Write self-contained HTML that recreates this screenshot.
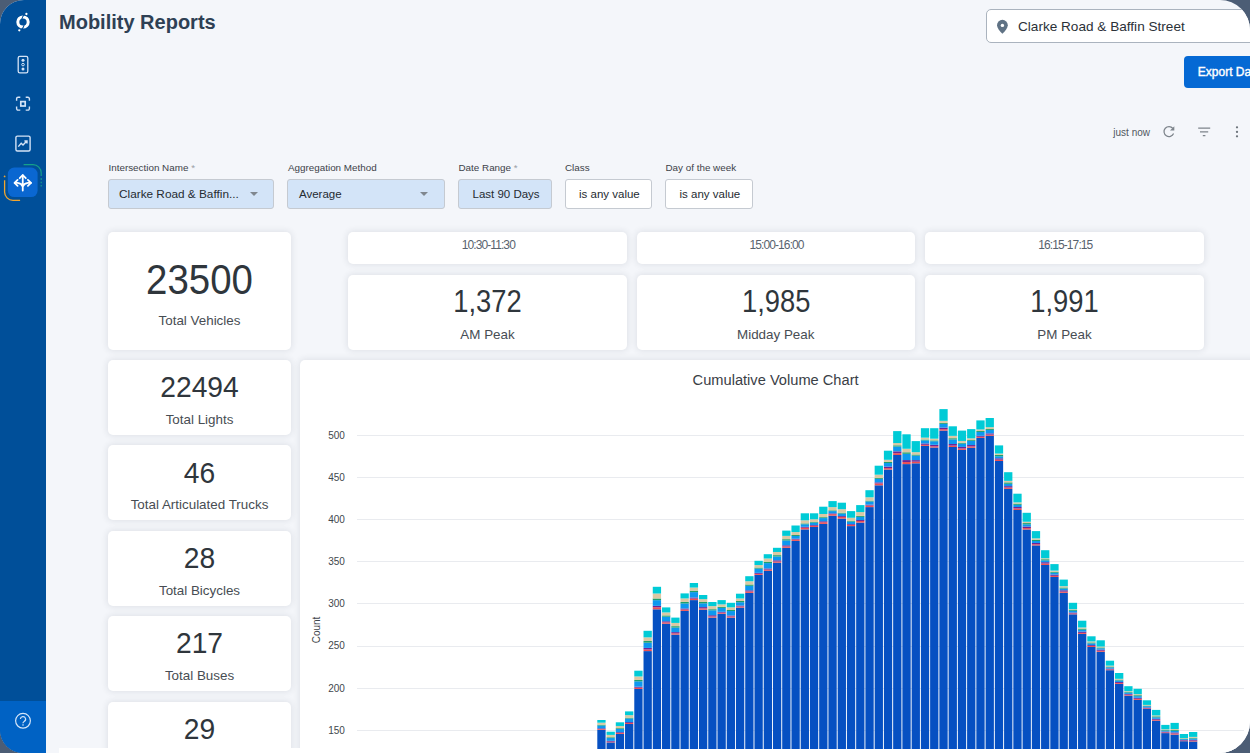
<!DOCTYPE html>
<html><head><meta charset="utf-8">
<style>
*{box-sizing:border-box;margin:0;padding:0}
html,body{width:1250px;height:753px;overflow:hidden;background:#4c5d75;font-family:"Liberation Sans",sans-serif}
#win{position:absolute;left:0;top:0;width:1250px;height:753px;border-radius:24px 30px 31px 23px;overflow:hidden;background:#f4f6fa}
.t{position:absolute;line-height:1;white-space:nowrap}
#side{position:absolute;left:0;top:0;width:46px;height:753px;background:#004f99}
#sideb{position:absolute;left:0;top:701px;width:46px;height:52px;background:#0062c4}
.search{position:absolute;left:986px;top:8.5px;width:300px;height:34.3px;background:#fff;border:1px solid #aab3be;border-radius:5px}
.export{position:absolute;left:1183.6px;top:56px;width:100px;height:32px;background:#0569d4;border-radius:4px}
.lbl{position:absolute;top:163.2px;font-size:9.85px;line-height:1;color:#3c4249;white-space:nowrap}
.lbl i{font-style:normal;color:#9aa0a6}
.sel{position:absolute;top:179px;height:30px;border:1px solid #c5cad1;border-radius:3px;background:#d3e4f8;color:#252b31}
.sel .t{top:8.5px;font-size:11.5px}
.sel.w{background:#fff}
.caret{position:absolute;top:12.3px;width:0;height:0;border-left:4px solid transparent;border-right:4px solid transparent;border-top:4px solid #80878f}
.card{position:absolute;background:#fff;border-radius:5px;box-shadow:0 0 6px 1px rgba(40,50,70,.10)}
.num{color:#2f363c;text-align:center}
.cap{color:#474d53;text-align:center;font-size:13.4px}
.ph{color:#58626e;text-align:center;font-size:12px;letter-spacing:-0.9px}
.yl{position:absolute;left:314.4px;width:30.5px;text-align:right;font-size:10px;line-height:1;color:#41474d}
.gl{position:absolute;left:357px;width:887px;height:1px;background:#e9ebef}
</style></head><body>
<div id="win">
  <div id="side">
    <svg class="t" style="left:0;top:0" width="46" height="210" viewBox="0 0 46 210">
      <!-- logo -->
      <ellipse cx="23" cy="22" rx="5.2" ry="5.1" fill="none" stroke="#fff" stroke-width="3"/>
      <path d="M24.6 14.2 Q22.4 16.5 21.6 19.6 M21.4 29.8 Q23.6 27.5 24.4 24.4" fill="none" stroke="#004f99" stroke-width="1.1"/>
      <circle cx="26.4" cy="14" r="1.15" fill="#fff"/>
      <circle cx="19.3" cy="30.3" r="1.15" fill="#fff"/>
      <!-- traffic light -->
      <rect x="18.2" y="56.3" width="9.6" height="16.6" rx="1.6" fill="none" stroke="#d4e3f6" stroke-width="1.3"/>
      <circle cx="23" cy="60.2" r="1.5" fill="#d4e3f6"/>
      <circle cx="23" cy="64.6" r="1.3" fill="none" stroke="#d4e3f6" stroke-width="1"/>
      <circle cx="23" cy="69" r="1.5" fill="#d4e3f6"/>
      <!-- focus -->
      <path d="M16.6 100.8 V98.8 A1.5 1.5 0 0 1 18.1 97.3 H20.3 M25.7 97.3 H27.9 A1.5 1.5 0 0 1 29.4 98.8 V100.8 M29.4 106.6 V108.6 A1.5 1.5 0 0 1 27.9 110.1 H25.7 M20.3 110.1 H18.1 A1.5 1.5 0 0 1 16.6 108.6 V106.6" fill="none" stroke="#d4e3f6" stroke-width="1.4"/>
      <rect x="20.8" y="101.6" width="4.4" height="4.4" fill="none" stroke="#d4e3f6" stroke-width="1.7"/>
      <!-- chart -->
      <rect x="15.9" y="136.1" width="14.2" height="14.9" rx="1.5" fill="none" stroke="#d4e3f6" stroke-width="1.4"/>
      <path d="M18.3 146.6 L21.2 143.3 L23 145 L26.6 141.2 M24.4 141 H27 V143.6" fill="none" stroke="#d4e3f6" stroke-width="1.4"/>
      <!-- active -->
      <path d="M23.6 164.7 H33 A8.2 8.2 0 0 1 41.2 172.9 V176" fill="none" stroke="#15a08a" stroke-width="1.2"/>
      <path d="M41.2 178 V180 M41.2 181.8 V183.2 M41.2 185 V186.6" fill="none" stroke="#15a08a" stroke-width="1.1"/>
      <path d="M4.6 180.2 V192 A8.3 8.3 0 0 0 12.9 200.3 H20.1" fill="none" stroke="#f2a52e" stroke-width="1.3"/>
      <circle cx="4.6" cy="176.4" r="0.9" fill="#f2a52e"/>
      <rect x="7.8" y="167.6" width="29.8" height="29.5" rx="6.5" fill="#0a67d1"/>
      <path d="M22.75 175.5 V190.6 M14.8 182.9 H17.5 C20 183.2 22 184.5 22.75 186.6 C23.5 184.5 25.5 183.2 28 182.9 H30.9" fill="none" stroke="#fff" stroke-width="1.8" stroke-linecap="round" stroke-linejoin="round"/>
      <path d="M19.7 178.2 L22.75 175 L25.8 178.2 M17.6 179.9 L14.5 182.9 L17.6 185.8 M27.9 179.9 L31 182.9 L27.9 185.8" fill="none" stroke="#fff" stroke-width="1.8" stroke-linecap="round" stroke-linejoin="round"/>
    </svg>
  </div>
  <div id="sideb">
    <svg class="t" style="left:0;top:0" width="46" height="52" viewBox="0 701 46 52">
      <circle cx="23" cy="720.8" r="7.4" fill="none" stroke="#d2e4f8" stroke-width="1.2"/>
      <path d="M20.4 719.1 A2.6 2.5 0 1 1 24.2 721.4 C23.3 721.9 23 722.5 23 723.3" fill="none" stroke="#d2e4f8" stroke-width="1.2"/>
      <rect x="22.3" y="724.3" width="1.4" height="1.3" fill="#d2e4f8"/>
    </svg>
  </div>

  <div class="t" style="left:59px;top:11.6px;font-size:20px;font-weight:bold;color:#2e4054">Mobility Reports</div>

  <div class="search">
    <svg class="t" style="left:9px;top:9px" width="14" height="16" viewBox="0 0 14 16">
      <path d="M6.4 14.8 C3.6 11.8 1 9 1 6.2 A5.4 5.4 0 0 1 11.8 6.2 C11.8 9 9.2 11.8 6.4 14.8 Z" fill="#5f7284"/>
      <circle cx="6.4" cy="6.4" r="1.7" fill="#fff"/>
    </svg>
    <div class="t" style="left:31px;top:10.2px;font-size:13.6px;color:#2b3138">Clarke Road &amp; Baffin Street</div>
  </div>
  <div class="export"><div class="t" style="left:14.2px;top:10px;font-size:12px;color:#fff;-webkit-text-stroke:0.4px #fff">Export Data</div></div>

  <div class="t" style="left:1113.3px;top:127.6px;font-size:10px;color:#50575e">just now</div>
  <svg class="t" style="left:0;top:0" width="1250" height="160" viewBox="0 0 1250 160">
    <path d="M1172.9 128.4 A5 5 0 1 0 1173.6 133.6" fill="none" stroke="#7d848b" stroke-width="1.25"/>
    <path d="M1174.3 126.3 L1174.3 130.6 L1170 130.6 Z" fill="#7d848b"/>
    <path d="M1198.2 128.1 H1210.2 M1200 131.8 H1208.2 M1202.8 135.6 H1205.4" stroke="#7d848b" stroke-width="1.2"/>
    <circle cx="1237" cy="127.3" r="1.15" fill="#6f767d"/><circle cx="1237" cy="131.9" r="1.15" fill="#6f767d"/><circle cx="1237" cy="136.3" r="1.15" fill="#6f767d"/>
  </svg>

  <div class="lbl" style="left:108.5px">Intersection Name <i>*</i></div>
  <div class="sel" style="left:108px;width:166px"><span class="t" style="left:10px;font-size:11.8px">Clarke Road &amp; Baffin...</span><span class="caret" style="left:141px"></span></div>
  <div class="lbl" style="left:288px">Aggregation Method</div>
  <div class="sel" style="left:287px;width:158px"><span class="t" style="left:11px">Average</span><span class="caret" style="left:132px"></span></div>
  <div class="lbl" style="left:458.5px">Date Range <i>*</i></div>
  <div class="sel" style="left:458px;width:94px"><span class="t" style="left:13.5px">Last 90 Days</span></div>
  <div class="lbl" style="left:565px">Class</div>
  <div class="sel w" style="left:565px;width:87px"><span class="t" style="left:13px">is any value</span></div>
  <div class="lbl" style="left:665.5px">Day of the week</div>
  <div class="sel w" style="left:665px;width:88px"><span class="t" style="left:13.5px">is any value</span></div>

  <!-- peak cards -->
  <div class="card" style="left:348px;top:232px;width:279px;height:32px"><div class="t ph" style="left:1.6px;right:0;top:6.8px">10:30-11:30</div></div>
  <div class="card" style="left:636.5px;top:232px;width:278.5px;height:32px"><div class="t ph" style="left:1.6px;right:0;top:6.8px">15:00-16:00</div></div>
  <div class="card" style="left:925px;top:232px;width:279px;height:32px"><div class="t ph" style="left:1.6px;right:0;top:6.8px">16:15-17:15</div></div>

  <div class="card" style="left:348px;top:275px;width:279px;height:75px">
    <div class="t num" style="left:0;right:0;top:11.1px;font-size:31.8px;transform:scaleX(0.86)">1,372</div>
    <div class="t cap" style="left:0;right:0;top:52.6px">AM Peak</div></div>
  <div class="card" style="left:636.5px;top:275px;width:278.5px;height:75px">
    <div class="t num" style="left:0;right:0;top:11.1px;font-size:31.8px;transform:scaleX(0.86)">1,985</div>
    <div class="t cap" style="left:0;right:0;top:52.6px">Midday Peak</div></div>
  <div class="card" style="left:925px;top:275px;width:279px;height:75px">
    <div class="t num" style="left:0;right:0;top:11.1px;font-size:31.8px;transform:scaleX(0.86)">1,991</div>
    <div class="t cap" style="left:0;right:0;top:52.6px">PM Peak</div></div>

  <!-- left column -->
  <div class="card" style="left:108px;top:232px;width:183px;height:118px">
    <div class="t num" style="left:0;right:0;top:26.2px;font-size:43.2px;transform:scaleX(0.89)">23500</div>
    <div class="t cap" style="left:0;right:0;top:82px">Total Vehicles</div></div>
  <div class="card" style="left:108px;top:360px;width:183px;height:75px">
    <div class="t num" style="left:0;right:0;top:12.2px;font-size:30px;transform:scaleX(0.94)">22494</div>
    <div class="t cap" style="left:0;right:0;top:52.8px">Total Lights</div></div>
  <div class="card" style="left:108px;top:445.4px;width:183px;height:75px">
    <div class="t num" style="left:0;right:0;top:12.2px;font-size:30px;transform:scaleX(0.94)">46</div>
    <div class="t cap" style="left:0;right:0;top:52.8px">Total Articulated Trucks</div></div>
  <div class="card" style="left:108px;top:530.8px;width:183px;height:75px">
    <div class="t num" style="left:0;right:0;top:12.2px;font-size:30px;transform:scaleX(0.94)">28</div>
    <div class="t cap" style="left:0;right:0;top:52.8px">Total Bicycles</div></div>
  <div class="card" style="left:108px;top:616px;width:183px;height:75px">
    <div class="t num" style="left:0;right:0;top:12.2px;font-size:30px;transform:scaleX(0.94)">217</div>
    <div class="t cap" style="left:0;right:0;top:52.8px">Total Buses</div></div>
  <div class="card" style="left:108px;top:701.5px;width:183px;height:75px">
    <div class="t num" style="left:0;right:0;top:12.2px;font-size:30px;transform:scaleX(0.94)">29</div></div>

  <!-- chart -->
  <div class="card" style="left:300px;top:360px;width:1000px;height:500px"></div>
  <div class="t" style="left:692.6px;top:372.6px;font-size:14.65px;color:#3a4046">Cumulative Volume Chart</div>
  <div class="gl" style="top:730px"></div>
<div class="yl" style="top:725.70px">150</div>
<div class="gl" style="top:688px"></div>
<div class="yl" style="top:683.59px">200</div>
<div class="gl" style="top:646px"></div>
<div class="yl" style="top:641.47px">250</div>
<div class="gl" style="top:603px"></div>
<div class="yl" style="top:599.36px">300</div>
<div class="gl" style="top:561px"></div>
<div class="yl" style="top:557.24px">350</div>
<div class="gl" style="top:519px"></div>
<div class="yl" style="top:515.12px">400</div>
<div class="gl" style="top:477px"></div>
<div class="yl" style="top:473.01px">450</div>
<div class="gl" style="top:435px"></div>
<div class="yl" style="top:430.90px">500</div>
  <div class="t" style="left:296.6px;top:624.7px;width:40px;font-size:10px;color:#3f454b;transform:rotate(-90deg);text-align:center">Count</div>
  <div class="t" style="left:59px;top:748.4px;width:1250px;height:10px;background:#fff"></div>
  <svg class="t" style="left:0;top:0" width="1250" height="753" viewBox="0 0 1250 753">
<rect x="597.30" y="729.80" width="8.3" height="19.20" fill="#0650c2"/>
<rect x="597.30" y="729.04" width="8.3" height="0.76" fill="#ee4f52"/>
<rect x="597.30" y="728.31" width="8.3" height="0.73" fill="#6c2397"/>
<rect x="597.30" y="725.55" width="8.3" height="2.76" fill="#0c98f0"/>
<rect x="597.30" y="724.70" width="8.3" height="0.85" fill="#1da06c"/>
<rect x="597.30" y="722.68" width="8.3" height="2.02" fill="#dbc8a3"/>
<rect x="597.30" y="720.00" width="8.3" height="2.68" fill="#00cbd6"/>
<rect x="606.54" y="742.40" width="8.3" height="6.60" fill="#0650c2"/>
<rect x="606.54" y="741.66" width="8.3" height="0.74" fill="#ee4f52"/>
<rect x="606.54" y="740.84" width="8.3" height="0.83" fill="#6c2397"/>
<rect x="606.54" y="738.04" width="8.3" height="2.80" fill="#0c98f0"/>
<rect x="606.54" y="737.25" width="8.3" height="0.79" fill="#1da06c"/>
<rect x="606.54" y="734.90" width="8.3" height="2.35" fill="#dbc8a3"/>
<rect x="606.54" y="731.70" width="8.3" height="3.20" fill="#00cbd6"/>
<rect x="615.79" y="733.90" width="8.3" height="15.10" fill="#0650c2"/>
<rect x="615.79" y="732.93" width="8.3" height="0.97" fill="#ee4f52"/>
<rect x="615.79" y="732.16" width="8.3" height="0.77" fill="#6c2397"/>
<rect x="615.79" y="728.94" width="8.3" height="3.22" fill="#0c98f0"/>
<rect x="615.79" y="728.15" width="8.3" height="0.79" fill="#1da06c"/>
<rect x="615.79" y="725.97" width="8.3" height="2.18" fill="#dbc8a3"/>
<rect x="615.79" y="722.30" width="8.3" height="3.67" fill="#00cbd6"/>
<rect x="625.03" y="724.00" width="8.3" height="25.00" fill="#0650c2"/>
<rect x="625.03" y="723.02" width="8.3" height="0.98" fill="#ee4f52"/>
<rect x="625.03" y="722.10" width="8.3" height="0.92" fill="#6c2397"/>
<rect x="625.03" y="718.51" width="8.3" height="3.59" fill="#0c98f0"/>
<rect x="625.03" y="717.66" width="8.3" height="0.85" fill="#1da06c"/>
<rect x="625.03" y="715.16" width="8.3" height="2.50" fill="#dbc8a3"/>
<rect x="625.03" y="711.40" width="8.3" height="3.76" fill="#00cbd6"/>
<rect x="634.28" y="689.00" width="8.3" height="60.00" fill="#0650c2"/>
<rect x="634.28" y="687.70" width="8.3" height="1.30" fill="#ee4f52"/>
<rect x="634.28" y="686.67" width="8.3" height="1.04" fill="#6c2397"/>
<rect x="634.28" y="681.31" width="8.3" height="5.35" fill="#0c98f0"/>
<rect x="634.28" y="679.95" width="8.3" height="1.37" fill="#1da06c"/>
<rect x="634.28" y="676.46" width="8.3" height="3.49" fill="#dbc8a3"/>
<rect x="634.28" y="670.70" width="8.3" height="5.76" fill="#00cbd6"/>
<rect x="643.52" y="651.10" width="8.3" height="97.90" fill="#0650c2"/>
<rect x="643.52" y="649.45" width="8.3" height="1.65" fill="#ee4f52"/>
<rect x="643.52" y="647.92" width="8.3" height="1.53" fill="#6c2397"/>
<rect x="643.52" y="642.67" width="8.3" height="5.25" fill="#0c98f0"/>
<rect x="643.52" y="640.99" width="8.3" height="1.69" fill="#1da06c"/>
<rect x="643.52" y="637.37" width="8.3" height="3.62" fill="#dbc8a3"/>
<rect x="643.52" y="630.80" width="8.3" height="6.57" fill="#00cbd6"/>
<rect x="652.77" y="609.30" width="8.3" height="139.70" fill="#0650c2"/>
<rect x="652.77" y="607.26" width="8.3" height="2.04" fill="#ee4f52"/>
<rect x="652.77" y="605.86" width="8.3" height="1.41" fill="#6c2397"/>
<rect x="652.77" y="600.15" width="8.3" height="5.70" fill="#0c98f0"/>
<rect x="652.77" y="598.48" width="8.3" height="1.67" fill="#1da06c"/>
<rect x="652.77" y="593.53" width="8.3" height="4.95" fill="#dbc8a3"/>
<rect x="652.77" y="586.80" width="8.3" height="6.73" fill="#00cbd6"/>
<rect x="662.01" y="623.70" width="8.3" height="125.30" fill="#0650c2"/>
<rect x="662.01" y="622.34" width="8.3" height="1.36" fill="#ee4f52"/>
<rect x="662.01" y="621.26" width="8.3" height="1.08" fill="#6c2397"/>
<rect x="662.01" y="616.67" width="8.3" height="4.59" fill="#0c98f0"/>
<rect x="662.01" y="615.41" width="8.3" height="1.26" fill="#1da06c"/>
<rect x="662.01" y="612.44" width="8.3" height="2.97" fill="#dbc8a3"/>
<rect x="662.01" y="607.40" width="8.3" height="5.04" fill="#00cbd6"/>
<rect x="671.26" y="634.60" width="8.3" height="114.40" fill="#0650c2"/>
<rect x="671.26" y="633.33" width="8.3" height="1.27" fill="#ee4f52"/>
<rect x="671.26" y="632.12" width="8.3" height="1.21" fill="#6c2397"/>
<rect x="671.26" y="627.56" width="8.3" height="4.56" fill="#0c98f0"/>
<rect x="671.26" y="626.16" width="8.3" height="1.39" fill="#1da06c"/>
<rect x="671.26" y="622.92" width="8.3" height="3.25" fill="#dbc8a3"/>
<rect x="671.26" y="617.60" width="8.3" height="5.32" fill="#00cbd6"/>
<rect x="680.50" y="610.90" width="8.3" height="138.10" fill="#0650c2"/>
<rect x="680.50" y="609.52" width="8.3" height="1.38" fill="#ee4f52"/>
<rect x="680.50" y="608.49" width="8.3" height="1.03" fill="#6c2397"/>
<rect x="680.50" y="603.40" width="8.3" height="5.09" fill="#0c98f0"/>
<rect x="680.50" y="601.91" width="8.3" height="1.49" fill="#1da06c"/>
<rect x="680.50" y="598.42" width="8.3" height="3.49" fill="#dbc8a3"/>
<rect x="680.50" y="593.40" width="8.3" height="5.02" fill="#00cbd6"/>
<rect x="689.75" y="600.10" width="8.3" height="148.90" fill="#0650c2"/>
<rect x="689.75" y="598.61" width="8.3" height="1.49" fill="#ee4f52"/>
<rect x="689.75" y="597.49" width="8.3" height="1.12" fill="#6c2397"/>
<rect x="689.75" y="592.10" width="8.3" height="5.39" fill="#0c98f0"/>
<rect x="689.75" y="590.67" width="8.3" height="1.43" fill="#1da06c"/>
<rect x="689.75" y="587.56" width="8.3" height="3.11" fill="#dbc8a3"/>
<rect x="689.75" y="583.00" width="8.3" height="4.56" fill="#00cbd6"/>
<rect x="698.99" y="609.70" width="8.3" height="139.30" fill="#0650c2"/>
<rect x="698.99" y="608.34" width="8.3" height="1.36" fill="#ee4f52"/>
<rect x="698.99" y="607.10" width="8.3" height="1.24" fill="#6c2397"/>
<rect x="698.99" y="603.32" width="8.3" height="3.78" fill="#0c98f0"/>
<rect x="698.99" y="601.98" width="8.3" height="1.34" fill="#1da06c"/>
<rect x="698.99" y="599.13" width="8.3" height="2.85" fill="#dbc8a3"/>
<rect x="698.99" y="595.00" width="8.3" height="4.13" fill="#00cbd6"/>
<rect x="708.24" y="617.60" width="8.3" height="131.40" fill="#0650c2"/>
<rect x="708.24" y="616.41" width="8.3" height="1.19" fill="#ee4f52"/>
<rect x="708.24" y="615.22" width="8.3" height="1.20" fill="#6c2397"/>
<rect x="708.24" y="610.30" width="8.3" height="4.92" fill="#0c98f0"/>
<rect x="708.24" y="609.20" width="8.3" height="1.09" fill="#1da06c"/>
<rect x="708.24" y="606.10" width="8.3" height="3.11" fill="#dbc8a3"/>
<rect x="708.24" y="602.00" width="8.3" height="4.10" fill="#00cbd6"/>
<rect x="717.48" y="613.70" width="8.3" height="135.30" fill="#0650c2"/>
<rect x="717.48" y="612.64" width="8.3" height="1.06" fill="#ee4f52"/>
<rect x="717.48" y="611.81" width="8.3" height="0.83" fill="#6c2397"/>
<rect x="717.48" y="607.92" width="8.3" height="3.89" fill="#0c98f0"/>
<rect x="717.48" y="606.77" width="8.3" height="1.14" fill="#1da06c"/>
<rect x="717.48" y="604.40" width="8.3" height="2.37" fill="#dbc8a3"/>
<rect x="717.48" y="600.10" width="8.3" height="4.30" fill="#00cbd6"/>
<rect x="726.73" y="617.60" width="8.3" height="131.40" fill="#0650c2"/>
<rect x="726.73" y="616.43" width="8.3" height="1.17" fill="#ee4f52"/>
<rect x="726.73" y="615.49" width="8.3" height="0.94" fill="#6c2397"/>
<rect x="726.73" y="611.04" width="8.3" height="4.45" fill="#0c98f0"/>
<rect x="726.73" y="609.97" width="8.3" height="1.06" fill="#1da06c"/>
<rect x="726.73" y="607.31" width="8.3" height="2.67" fill="#dbc8a3"/>
<rect x="726.73" y="602.80" width="8.3" height="4.51" fill="#00cbd6"/>
<rect x="735.97" y="607.60" width="8.3" height="141.40" fill="#0650c2"/>
<rect x="735.97" y="606.45" width="8.3" height="1.15" fill="#ee4f52"/>
<rect x="735.97" y="605.57" width="8.3" height="0.88" fill="#6c2397"/>
<rect x="735.97" y="602.20" width="8.3" height="3.37" fill="#0c98f0"/>
<rect x="735.97" y="600.96" width="8.3" height="1.24" fill="#1da06c"/>
<rect x="735.97" y="598.46" width="8.3" height="2.50" fill="#dbc8a3"/>
<rect x="735.97" y="593.70" width="8.3" height="4.76" fill="#00cbd6"/>
<rect x="745.22" y="592.90" width="8.3" height="156.10" fill="#0650c2"/>
<rect x="745.22" y="591.44" width="8.3" height="1.46" fill="#ee4f52"/>
<rect x="745.22" y="590.33" width="8.3" height="1.10" fill="#6c2397"/>
<rect x="745.22" y="585.81" width="8.3" height="4.53" fill="#0c98f0"/>
<rect x="745.22" y="584.49" width="8.3" height="1.32" fill="#1da06c"/>
<rect x="745.22" y="581.25" width="8.3" height="3.24" fill="#dbc8a3"/>
<rect x="745.22" y="576.20" width="8.3" height="5.05" fill="#00cbd6"/>
<rect x="754.46" y="574.90" width="8.3" height="174.10" fill="#0650c2"/>
<rect x="754.46" y="573.81" width="8.3" height="1.09" fill="#ee4f52"/>
<rect x="754.46" y="572.85" width="8.3" height="0.97" fill="#6c2397"/>
<rect x="754.46" y="568.62" width="8.3" height="4.23" fill="#0c98f0"/>
<rect x="754.46" y="567.55" width="8.3" height="1.07" fill="#1da06c"/>
<rect x="754.46" y="565.07" width="8.3" height="2.48" fill="#dbc8a3"/>
<rect x="754.46" y="560.80" width="8.3" height="4.27" fill="#00cbd6"/>
<rect x="763.71" y="570.80" width="8.3" height="178.20" fill="#0650c2"/>
<rect x="763.71" y="569.56" width="8.3" height="1.24" fill="#ee4f52"/>
<rect x="763.71" y="568.46" width="8.3" height="1.10" fill="#6c2397"/>
<rect x="763.71" y="563.08" width="8.3" height="5.37" fill="#0c98f0"/>
<rect x="763.71" y="561.73" width="8.3" height="1.35" fill="#1da06c"/>
<rect x="763.71" y="558.50" width="8.3" height="3.24" fill="#dbc8a3"/>
<rect x="763.71" y="554.20" width="8.3" height="4.30" fill="#00cbd6"/>
<rect x="772.95" y="562.70" width="8.3" height="186.30" fill="#0650c2"/>
<rect x="772.95" y="561.45" width="8.3" height="1.25" fill="#ee4f52"/>
<rect x="772.95" y="560.30" width="8.3" height="1.15" fill="#6c2397"/>
<rect x="772.95" y="556.46" width="8.3" height="3.84" fill="#0c98f0"/>
<rect x="772.95" y="555.14" width="8.3" height="1.33" fill="#1da06c"/>
<rect x="772.95" y="551.97" width="8.3" height="3.16" fill="#dbc8a3"/>
<rect x="772.95" y="547.80" width="8.3" height="4.17" fill="#00cbd6"/>
<rect x="782.20" y="547.80" width="8.3" height="201.20" fill="#0650c2"/>
<rect x="782.20" y="546.44" width="8.3" height="1.36" fill="#ee4f52"/>
<rect x="782.20" y="545.30" width="8.3" height="1.14" fill="#6c2397"/>
<rect x="782.20" y="540.45" width="8.3" height="4.85" fill="#0c98f0"/>
<rect x="782.20" y="539.19" width="8.3" height="1.26" fill="#1da06c"/>
<rect x="782.20" y="535.88" width="8.3" height="3.31" fill="#dbc8a3"/>
<rect x="782.20" y="530.60" width="8.3" height="5.28" fill="#00cbd6"/>
<rect x="791.44" y="540.90" width="8.3" height="208.10" fill="#0650c2"/>
<rect x="791.44" y="539.55" width="8.3" height="1.35" fill="#ee4f52"/>
<rect x="791.44" y="538.72" width="8.3" height="0.82" fill="#6c2397"/>
<rect x="791.44" y="535.97" width="8.3" height="2.75" fill="#0c98f0"/>
<rect x="791.44" y="534.98" width="8.3" height="0.99" fill="#1da06c"/>
<rect x="791.44" y="532.06" width="8.3" height="2.93" fill="#dbc8a3"/>
<rect x="791.44" y="525.50" width="8.3" height="6.56" fill="#00cbd6"/>
<rect x="800.69" y="529.40" width="8.3" height="219.60" fill="#0650c2"/>
<rect x="800.69" y="527.74" width="8.3" height="1.66" fill="#ee4f52"/>
<rect x="800.69" y="526.82" width="8.3" height="0.92" fill="#6c2397"/>
<rect x="800.69" y="524.25" width="8.3" height="2.56" fill="#0c98f0"/>
<rect x="800.69" y="523.41" width="8.3" height="0.84" fill="#1da06c"/>
<rect x="800.69" y="520.30" width="8.3" height="3.11" fill="#dbc8a3"/>
<rect x="800.69" y="513.30" width="8.3" height="7.00" fill="#00cbd6"/>
<rect x="809.93" y="527.00" width="8.3" height="222.00" fill="#0650c2"/>
<rect x="809.93" y="525.75" width="8.3" height="1.25" fill="#ee4f52"/>
<rect x="809.93" y="524.98" width="8.3" height="0.77" fill="#6c2397"/>
<rect x="809.93" y="522.61" width="8.3" height="2.37" fill="#0c98f0"/>
<rect x="809.93" y="521.99" width="8.3" height="0.63" fill="#1da06c"/>
<rect x="809.93" y="519.27" width="8.3" height="2.71" fill="#dbc8a3"/>
<rect x="809.93" y="513.30" width="8.3" height="5.97" fill="#00cbd6"/>
<rect x="819.18" y="523.90" width="8.3" height="225.10" fill="#0650c2"/>
<rect x="819.18" y="522.23" width="8.3" height="1.67" fill="#ee4f52"/>
<rect x="819.18" y="521.26" width="8.3" height="0.97" fill="#6c2397"/>
<rect x="819.18" y="518.08" width="8.3" height="3.18" fill="#0c98f0"/>
<rect x="819.18" y="517.18" width="8.3" height="0.90" fill="#1da06c"/>
<rect x="819.18" y="513.98" width="8.3" height="3.20" fill="#dbc8a3"/>
<rect x="819.18" y="506.70" width="8.3" height="7.28" fill="#00cbd6"/>
<rect x="828.42" y="515.70" width="8.3" height="233.30" fill="#0650c2"/>
<rect x="828.42" y="514.15" width="8.3" height="1.55" fill="#ee4f52"/>
<rect x="828.42" y="513.38" width="8.3" height="0.77" fill="#6c2397"/>
<rect x="828.42" y="511.10" width="8.3" height="2.28" fill="#0c98f0"/>
<rect x="828.42" y="510.34" width="8.3" height="0.76" fill="#1da06c"/>
<rect x="828.42" y="507.12" width="8.3" height="3.21" fill="#dbc8a3"/>
<rect x="828.42" y="501.10" width="8.3" height="6.02" fill="#00cbd6"/>
<rect x="837.67" y="518.60" width="8.3" height="230.40" fill="#0650c2"/>
<rect x="837.67" y="516.87" width="8.3" height="1.73" fill="#ee4f52"/>
<rect x="837.67" y="516.02" width="8.3" height="0.85" fill="#6c2397"/>
<rect x="837.67" y="513.57" width="8.3" height="2.46" fill="#0c98f0"/>
<rect x="837.67" y="512.67" width="8.3" height="0.90" fill="#1da06c"/>
<rect x="837.67" y="509.18" width="8.3" height="3.49" fill="#dbc8a3"/>
<rect x="837.67" y="502.70" width="8.3" height="6.48" fill="#00cbd6"/>
<rect x="846.91" y="526.10" width="8.3" height="222.90" fill="#0650c2"/>
<rect x="846.91" y="524.78" width="8.3" height="1.32" fill="#ee4f52"/>
<rect x="846.91" y="524.01" width="8.3" height="0.77" fill="#6c2397"/>
<rect x="846.91" y="521.62" width="8.3" height="2.40" fill="#0c98f0"/>
<rect x="846.91" y="520.90" width="8.3" height="0.72" fill="#1da06c"/>
<rect x="846.91" y="517.76" width="8.3" height="3.14" fill="#dbc8a3"/>
<rect x="846.91" y="511.10" width="8.3" height="6.66" fill="#00cbd6"/>
<rect x="856.16" y="522.60" width="8.3" height="226.40" fill="#0650c2"/>
<rect x="856.16" y="521.02" width="8.3" height="1.58" fill="#ee4f52"/>
<rect x="856.16" y="520.04" width="8.3" height="0.98" fill="#6c2397"/>
<rect x="856.16" y="516.90" width="8.3" height="3.14" fill="#0c98f0"/>
<rect x="856.16" y="515.90" width="8.3" height="1.00" fill="#1da06c"/>
<rect x="856.16" y="512.09" width="8.3" height="3.81" fill="#dbc8a3"/>
<rect x="856.16" y="505.10" width="8.3" height="6.99" fill="#00cbd6"/>
<rect x="865.40" y="507.10" width="8.3" height="241.90" fill="#0650c2"/>
<rect x="865.40" y="505.56" width="8.3" height="1.54" fill="#ee4f52"/>
<rect x="865.40" y="504.59" width="8.3" height="0.97" fill="#6c2397"/>
<rect x="865.40" y="501.48" width="8.3" height="3.11" fill="#0c98f0"/>
<rect x="865.40" y="500.59" width="8.3" height="0.89" fill="#1da06c"/>
<rect x="865.40" y="497.29" width="8.3" height="3.30" fill="#dbc8a3"/>
<rect x="865.40" y="490.20" width="8.3" height="7.09" fill="#00cbd6"/>
<rect x="874.65" y="485.30" width="8.3" height="263.70" fill="#0650c2"/>
<rect x="874.65" y="483.46" width="8.3" height="1.84" fill="#ee4f52"/>
<rect x="874.65" y="482.35" width="8.3" height="1.10" fill="#6c2397"/>
<rect x="874.65" y="478.84" width="8.3" height="3.51" fill="#0c98f0"/>
<rect x="874.65" y="477.91" width="8.3" height="0.93" fill="#1da06c"/>
<rect x="874.65" y="474.69" width="8.3" height="3.22" fill="#dbc8a3"/>
<rect x="874.65" y="465.70" width="8.3" height="8.99" fill="#00cbd6"/>
<rect x="883.89" y="469.60" width="8.3" height="279.40" fill="#0650c2"/>
<rect x="883.89" y="468.11" width="8.3" height="1.49" fill="#ee4f52"/>
<rect x="883.89" y="466.58" width="8.3" height="1.53" fill="#6c2397"/>
<rect x="883.89" y="463.03" width="8.3" height="3.55" fill="#0c98f0"/>
<rect x="883.89" y="461.95" width="8.3" height="1.08" fill="#1da06c"/>
<rect x="883.89" y="459.79" width="8.3" height="2.15" fill="#dbc8a3"/>
<rect x="883.89" y="450.70" width="8.3" height="9.09" fill="#00cbd6"/>
<rect x="893.14" y="455.00" width="8.3" height="294.00" fill="#0650c2"/>
<rect x="893.14" y="453.19" width="8.3" height="1.81" fill="#ee4f52"/>
<rect x="893.14" y="451.33" width="8.3" height="1.86" fill="#6c2397"/>
<rect x="893.14" y="446.52" width="8.3" height="4.81" fill="#0c98f0"/>
<rect x="893.14" y="445.31" width="8.3" height="1.21" fill="#1da06c"/>
<rect x="893.14" y="443.05" width="8.3" height="2.26" fill="#dbc8a3"/>
<rect x="893.14" y="431.10" width="8.3" height="11.95" fill="#00cbd6"/>
<rect x="902.38" y="464.10" width="8.3" height="284.90" fill="#0650c2"/>
<rect x="902.38" y="462.03" width="8.3" height="2.07" fill="#ee4f52"/>
<rect x="902.38" y="460.07" width="8.3" height="1.96" fill="#6c2397"/>
<rect x="902.38" y="453.79" width="8.3" height="6.28" fill="#0c98f0"/>
<rect x="902.38" y="452.28" width="8.3" height="1.51" fill="#1da06c"/>
<rect x="902.38" y="448.76" width="8.3" height="3.52" fill="#dbc8a3"/>
<rect x="902.38" y="434.30" width="8.3" height="14.46" fill="#00cbd6"/>
<rect x="911.63" y="463.30" width="8.3" height="285.70" fill="#0650c2"/>
<rect x="911.63" y="461.67" width="8.3" height="1.63" fill="#ee4f52"/>
<rect x="911.63" y="460.13" width="8.3" height="1.54" fill="#6c2397"/>
<rect x="911.63" y="455.67" width="8.3" height="4.46" fill="#0c98f0"/>
<rect x="911.63" y="454.50" width="8.3" height="1.16" fill="#1da06c"/>
<rect x="911.63" y="452.17" width="8.3" height="2.33" fill="#dbc8a3"/>
<rect x="911.63" y="441.10" width="8.3" height="11.07" fill="#00cbd6"/>
<rect x="920.88" y="445.90" width="8.3" height="303.10" fill="#0650c2"/>
<rect x="920.88" y="444.82" width="8.3" height="1.08" fill="#ee4f52"/>
<rect x="920.88" y="443.47" width="8.3" height="1.35" fill="#6c2397"/>
<rect x="920.88" y="440.38" width="8.3" height="3.09" fill="#0c98f0"/>
<rect x="920.88" y="439.53" width="8.3" height="0.85" fill="#1da06c"/>
<rect x="920.88" y="437.64" width="8.3" height="1.89" fill="#dbc8a3"/>
<rect x="920.88" y="428.20" width="8.3" height="9.44" fill="#00cbd6"/>
<rect x="930.12" y="447.50" width="8.3" height="301.50" fill="#0650c2"/>
<rect x="930.12" y="446.26" width="8.3" height="1.24" fill="#ee4f52"/>
<rect x="930.12" y="444.82" width="8.3" height="1.44" fill="#6c2397"/>
<rect x="930.12" y="441.24" width="8.3" height="3.57" fill="#0c98f0"/>
<rect x="930.12" y="440.38" width="8.3" height="0.87" fill="#1da06c"/>
<rect x="930.12" y="438.69" width="8.3" height="1.68" fill="#dbc8a3"/>
<rect x="930.12" y="428.20" width="8.3" height="10.49" fill="#00cbd6"/>
<rect x="939.37" y="430.60" width="8.3" height="318.40" fill="#0650c2"/>
<rect x="939.37" y="429.17" width="8.3" height="1.43" fill="#ee4f52"/>
<rect x="939.37" y="427.60" width="8.3" height="1.57" fill="#6c2397"/>
<rect x="939.37" y="423.86" width="8.3" height="3.74" fill="#0c98f0"/>
<rect x="939.37" y="422.92" width="8.3" height="0.94" fill="#1da06c"/>
<rect x="939.37" y="420.84" width="8.3" height="2.08" fill="#dbc8a3"/>
<rect x="939.37" y="409.10" width="8.3" height="11.74" fill="#00cbd6"/>
<rect x="948.61" y="447.00" width="8.3" height="302.00" fill="#0650c2"/>
<rect x="948.61" y="445.64" width="8.3" height="1.36" fill="#ee4f52"/>
<rect x="948.61" y="444.00" width="8.3" height="1.64" fill="#6c2397"/>
<rect x="948.61" y="439.39" width="8.3" height="4.61" fill="#0c98f0"/>
<rect x="948.61" y="438.21" width="8.3" height="1.18" fill="#1da06c"/>
<rect x="948.61" y="435.85" width="8.3" height="2.36" fill="#dbc8a3"/>
<rect x="948.61" y="426.30" width="8.3" height="9.55" fill="#00cbd6"/>
<rect x="957.85" y="449.90" width="8.3" height="299.10" fill="#0650c2"/>
<rect x="957.85" y="448.47" width="8.3" height="1.43" fill="#ee4f52"/>
<rect x="957.85" y="446.94" width="8.3" height="1.53" fill="#6c2397"/>
<rect x="957.85" y="443.69" width="8.3" height="3.24" fill="#0c98f0"/>
<rect x="957.85" y="442.78" width="8.3" height="0.92" fill="#1da06c"/>
<rect x="957.85" y="440.94" width="8.3" height="1.84" fill="#dbc8a3"/>
<rect x="957.85" y="430.60" width="8.3" height="10.34" fill="#00cbd6"/>
<rect x="967.10" y="447.80" width="8.3" height="301.20" fill="#0650c2"/>
<rect x="967.10" y="446.43" width="8.3" height="1.37" fill="#ee4f52"/>
<rect x="967.10" y="445.04" width="8.3" height="1.39" fill="#6c2397"/>
<rect x="967.10" y="440.93" width="8.3" height="4.12" fill="#0c98f0"/>
<rect x="967.10" y="440.07" width="8.3" height="0.85" fill="#1da06c"/>
<rect x="967.10" y="438.34" width="8.3" height="1.73" fill="#dbc8a3"/>
<rect x="967.10" y="429.10" width="8.3" height="9.24" fill="#00cbd6"/>
<rect x="976.34" y="437.90" width="8.3" height="311.10" fill="#0650c2"/>
<rect x="976.34" y="436.82" width="8.3" height="1.08" fill="#ee4f52"/>
<rect x="976.34" y="435.75" width="8.3" height="1.06" fill="#6c2397"/>
<rect x="976.34" y="431.97" width="8.3" height="3.79" fill="#0c98f0"/>
<rect x="976.34" y="431.00" width="8.3" height="0.96" fill="#1da06c"/>
<rect x="976.34" y="429.48" width="8.3" height="1.53" fill="#dbc8a3"/>
<rect x="976.34" y="420.40" width="8.3" height="9.08" fill="#00cbd6"/>
<rect x="985.59" y="435.80" width="8.3" height="313.20" fill="#0650c2"/>
<rect x="985.59" y="434.58" width="8.3" height="1.22" fill="#ee4f52"/>
<rect x="985.59" y="433.37" width="8.3" height="1.22" fill="#6c2397"/>
<rect x="985.59" y="430.02" width="8.3" height="3.34" fill="#0c98f0"/>
<rect x="985.59" y="429.06" width="8.3" height="0.96" fill="#1da06c"/>
<rect x="985.59" y="427.17" width="8.3" height="1.89" fill="#dbc8a3"/>
<rect x="985.59" y="418.00" width="8.3" height="9.17" fill="#00cbd6"/>
<rect x="994.83" y="461.00" width="8.3" height="288.00" fill="#0650c2"/>
<rect x="994.83" y="459.67" width="8.3" height="1.33" fill="#ee4f52"/>
<rect x="994.83" y="458.28" width="8.3" height="1.39" fill="#6c2397"/>
<rect x="994.83" y="456.26" width="8.3" height="2.02" fill="#0c98f0"/>
<rect x="994.83" y="454.94" width="8.3" height="1.32" fill="#1da06c"/>
<rect x="994.83" y="453.55" width="8.3" height="1.39" fill="#dbc8a3"/>
<rect x="994.83" y="445.40" width="8.3" height="8.15" fill="#00cbd6"/>
<rect x="1004.08" y="488.90" width="8.3" height="260.10" fill="#0650c2"/>
<rect x="1004.08" y="487.54" width="8.3" height="1.36" fill="#ee4f52"/>
<rect x="1004.08" y="486.13" width="8.3" height="1.41" fill="#6c2397"/>
<rect x="1004.08" y="483.80" width="8.3" height="2.33" fill="#0c98f0"/>
<rect x="1004.08" y="482.37" width="8.3" height="1.43" fill="#1da06c"/>
<rect x="1004.08" y="480.87" width="8.3" height="1.50" fill="#dbc8a3"/>
<rect x="1004.08" y="472.20" width="8.3" height="8.67" fill="#00cbd6"/>
<rect x="1013.32" y="510.00" width="8.3" height="239.00" fill="#0650c2"/>
<rect x="1013.32" y="508.46" width="8.3" height="1.54" fill="#ee4f52"/>
<rect x="1013.32" y="506.99" width="8.3" height="1.47" fill="#6c2397"/>
<rect x="1013.32" y="504.84" width="8.3" height="2.16" fill="#0c98f0"/>
<rect x="1013.32" y="503.63" width="8.3" height="1.21" fill="#1da06c"/>
<rect x="1013.32" y="502.37" width="8.3" height="1.26" fill="#dbc8a3"/>
<rect x="1013.32" y="493.70" width="8.3" height="8.67" fill="#00cbd6"/>
<rect x="1022.57" y="529.50" width="8.3" height="219.50" fill="#0650c2"/>
<rect x="1022.57" y="528.07" width="8.3" height="1.43" fill="#ee4f52"/>
<rect x="1022.57" y="526.52" width="8.3" height="1.55" fill="#6c2397"/>
<rect x="1022.57" y="524.27" width="8.3" height="2.25" fill="#0c98f0"/>
<rect x="1022.57" y="523.07" width="8.3" height="1.20" fill="#1da06c"/>
<rect x="1022.57" y="521.75" width="8.3" height="1.32" fill="#dbc8a3"/>
<rect x="1022.57" y="512.80" width="8.3" height="8.95" fill="#00cbd6"/>
<rect x="1031.82" y="545.40" width="8.3" height="203.60" fill="#0650c2"/>
<rect x="1031.82" y="544.26" width="8.3" height="1.14" fill="#ee4f52"/>
<rect x="1031.82" y="542.98" width="8.3" height="1.28" fill="#6c2397"/>
<rect x="1031.82" y="540.99" width="8.3" height="1.99" fill="#0c98f0"/>
<rect x="1031.82" y="539.69" width="8.3" height="1.30" fill="#1da06c"/>
<rect x="1031.82" y="538.38" width="8.3" height="1.32" fill="#dbc8a3"/>
<rect x="1031.82" y="531.10" width="8.3" height="7.28" fill="#00cbd6"/>
<rect x="1041.06" y="565.00" width="8.3" height="184.00" fill="#0650c2"/>
<rect x="1041.06" y="563.58" width="8.3" height="1.42" fill="#ee4f52"/>
<rect x="1041.06" y="562.19" width="8.3" height="1.38" fill="#6c2397"/>
<rect x="1041.06" y="560.36" width="8.3" height="1.84" fill="#0c98f0"/>
<rect x="1041.06" y="559.24" width="8.3" height="1.12" fill="#1da06c"/>
<rect x="1041.06" y="558.24" width="8.3" height="1.00" fill="#dbc8a3"/>
<rect x="1041.06" y="550.20" width="8.3" height="8.04" fill="#00cbd6"/>
<rect x="1050.30" y="577.00" width="8.3" height="172.00" fill="#0650c2"/>
<rect x="1050.30" y="575.84" width="8.3" height="1.16" fill="#ee4f52"/>
<rect x="1050.30" y="574.60" width="8.3" height="1.24" fill="#6c2397"/>
<rect x="1050.30" y="572.72" width="8.3" height="1.88" fill="#0c98f0"/>
<rect x="1050.30" y="571.69" width="8.3" height="1.04" fill="#1da06c"/>
<rect x="1050.30" y="570.63" width="8.3" height="1.06" fill="#dbc8a3"/>
<rect x="1050.30" y="564.10" width="8.3" height="6.53" fill="#00cbd6"/>
<rect x="1059.55" y="592.80" width="8.3" height="156.20" fill="#0650c2"/>
<rect x="1059.55" y="591.63" width="8.3" height="1.17" fill="#ee4f52"/>
<rect x="1059.55" y="590.28" width="8.3" height="1.36" fill="#6c2397"/>
<rect x="1059.55" y="588.52" width="8.3" height="1.75" fill="#0c98f0"/>
<rect x="1059.55" y="587.47" width="8.3" height="1.05" fill="#1da06c"/>
<rect x="1059.55" y="586.20" width="8.3" height="1.27" fill="#dbc8a3"/>
<rect x="1059.55" y="579.60" width="8.3" height="6.60" fill="#00cbd6"/>
<rect x="1068.79" y="614.30" width="8.3" height="134.70" fill="#0650c2"/>
<rect x="1068.79" y="613.42" width="8.3" height="0.88" fill="#ee4f52"/>
<rect x="1068.79" y="612.53" width="8.3" height="0.89" fill="#6c2397"/>
<rect x="1068.79" y="610.79" width="8.3" height="1.74" fill="#0c98f0"/>
<rect x="1068.79" y="609.98" width="8.3" height="0.81" fill="#1da06c"/>
<rect x="1068.79" y="609.21" width="8.3" height="0.77" fill="#dbc8a3"/>
<rect x="1068.79" y="602.80" width="8.3" height="6.41" fill="#00cbd6"/>
<rect x="1078.04" y="633.90" width="8.3" height="115.10" fill="#0650c2"/>
<rect x="1078.04" y="632.89" width="8.3" height="1.01" fill="#ee4f52"/>
<rect x="1078.04" y="631.62" width="8.3" height="1.26" fill="#6c2397"/>
<rect x="1078.04" y="629.75" width="8.3" height="1.87" fill="#0c98f0"/>
<rect x="1078.04" y="628.63" width="8.3" height="1.12" fill="#1da06c"/>
<rect x="1078.04" y="627.47" width="8.3" height="1.16" fill="#dbc8a3"/>
<rect x="1078.04" y="620.70" width="8.3" height="6.77" fill="#00cbd6"/>
<rect x="1087.28" y="647.00" width="8.3" height="102.00" fill="#0650c2"/>
<rect x="1087.28" y="645.90" width="8.3" height="1.10" fill="#ee4f52"/>
<rect x="1087.28" y="645.02" width="8.3" height="0.87" fill="#6c2397"/>
<rect x="1087.28" y="643.32" width="8.3" height="1.70" fill="#0c98f0"/>
<rect x="1087.28" y="642.42" width="8.3" height="0.90" fill="#1da06c"/>
<rect x="1087.28" y="641.46" width="8.3" height="0.96" fill="#dbc8a3"/>
<rect x="1087.28" y="636.30" width="8.3" height="5.16" fill="#00cbd6"/>
<rect x="1096.53" y="651.80" width="8.3" height="97.20" fill="#0650c2"/>
<rect x="1096.53" y="650.74" width="8.3" height="1.06" fill="#ee4f52"/>
<rect x="1096.53" y="649.62" width="8.3" height="1.12" fill="#6c2397"/>
<rect x="1096.53" y="648.29" width="8.3" height="1.33" fill="#0c98f0"/>
<rect x="1096.53" y="647.46" width="8.3" height="0.83" fill="#1da06c"/>
<rect x="1096.53" y="646.56" width="8.3" height="0.89" fill="#dbc8a3"/>
<rect x="1096.53" y="640.30" width="8.3" height="6.26" fill="#00cbd6"/>
<rect x="1105.77" y="670.20" width="8.3" height="78.80" fill="#0650c2"/>
<rect x="1105.77" y="669.38" width="8.3" height="0.82" fill="#ee4f52"/>
<rect x="1105.77" y="668.58" width="8.3" height="0.80" fill="#6c2397"/>
<rect x="1105.77" y="667.31" width="8.3" height="1.27" fill="#0c98f0"/>
<rect x="1105.77" y="666.50" width="8.3" height="0.81" fill="#1da06c"/>
<rect x="1105.77" y="665.65" width="8.3" height="0.85" fill="#dbc8a3"/>
<rect x="1105.77" y="660.70" width="8.3" height="4.95" fill="#00cbd6"/>
<rect x="1115.02" y="683.90" width="8.3" height="65.10" fill="#0650c2"/>
<rect x="1115.02" y="682.93" width="8.3" height="0.97" fill="#ee4f52"/>
<rect x="1115.02" y="681.96" width="8.3" height="0.97" fill="#6c2397"/>
<rect x="1115.02" y="680.47" width="8.3" height="1.49" fill="#0c98f0"/>
<rect x="1115.02" y="679.59" width="8.3" height="0.87" fill="#1da06c"/>
<rect x="1115.02" y="678.81" width="8.3" height="0.78" fill="#dbc8a3"/>
<rect x="1115.02" y="673.00" width="8.3" height="5.81" fill="#00cbd6"/>
<rect x="1124.26" y="695.60" width="8.3" height="53.40" fill="#0650c2"/>
<rect x="1124.26" y="694.69" width="8.3" height="0.91" fill="#ee4f52"/>
<rect x="1124.26" y="693.91" width="8.3" height="0.78" fill="#6c2397"/>
<rect x="1124.26" y="692.57" width="8.3" height="1.34" fill="#0c98f0"/>
<rect x="1124.26" y="691.93" width="8.3" height="0.64" fill="#1da06c"/>
<rect x="1124.26" y="691.18" width="8.3" height="0.75" fill="#dbc8a3"/>
<rect x="1124.26" y="686.20" width="8.3" height="4.98" fill="#00cbd6"/>
<rect x="1133.51" y="699.90" width="8.3" height="49.10" fill="#0650c2"/>
<rect x="1133.51" y="698.81" width="8.3" height="1.09" fill="#ee4f52"/>
<rect x="1133.51" y="697.77" width="8.3" height="1.04" fill="#6c2397"/>
<rect x="1133.51" y="696.16" width="8.3" height="1.61" fill="#0c98f0"/>
<rect x="1133.51" y="695.20" width="8.3" height="0.96" fill="#1da06c"/>
<rect x="1133.51" y="694.16" width="8.3" height="1.03" fill="#dbc8a3"/>
<rect x="1133.51" y="688.80" width="8.3" height="5.36" fill="#00cbd6"/>
<rect x="1142.75" y="709.00" width="8.3" height="40.00" fill="#0650c2"/>
<rect x="1142.75" y="708.34" width="8.3" height="0.66" fill="#ee4f52"/>
<rect x="1142.75" y="707.54" width="8.3" height="0.80" fill="#6c2397"/>
<rect x="1142.75" y="706.23" width="8.3" height="1.31" fill="#0c98f0"/>
<rect x="1142.75" y="705.56" width="8.3" height="0.67" fill="#1da06c"/>
<rect x="1142.75" y="704.91" width="8.3" height="0.65" fill="#dbc8a3"/>
<rect x="1142.75" y="700.30" width="8.3" height="4.61" fill="#00cbd6"/>
<rect x="1152.00" y="720.70" width="8.3" height="28.30" fill="#0650c2"/>
<rect x="1152.00" y="719.75" width="8.3" height="0.95" fill="#ee4f52"/>
<rect x="1152.00" y="718.78" width="8.3" height="0.97" fill="#6c2397"/>
<rect x="1152.00" y="717.30" width="8.3" height="1.48" fill="#0c98f0"/>
<rect x="1152.00" y="716.34" width="8.3" height="0.95" fill="#1da06c"/>
<rect x="1152.00" y="715.46" width="8.3" height="0.88" fill="#dbc8a3"/>
<rect x="1152.00" y="709.90" width="8.3" height="5.56" fill="#00cbd6"/>
<rect x="1161.24" y="733.10" width="8.3" height="15.90" fill="#0650c2"/>
<rect x="1161.24" y="732.37" width="8.3" height="0.73" fill="#ee4f52"/>
<rect x="1161.24" y="731.58" width="8.3" height="0.79" fill="#6c2397"/>
<rect x="1161.24" y="730.57" width="8.3" height="1.01" fill="#0c98f0"/>
<rect x="1161.24" y="729.92" width="8.3" height="0.65" fill="#1da06c"/>
<rect x="1161.24" y="729.32" width="8.3" height="0.60" fill="#dbc8a3"/>
<rect x="1161.24" y="724.90" width="8.3" height="4.42" fill="#00cbd6"/>
<rect x="1170.49" y="734.60" width="8.3" height="14.40" fill="#0650c2"/>
<rect x="1170.49" y="733.47" width="8.3" height="1.13" fill="#ee4f52"/>
<rect x="1170.49" y="732.44" width="8.3" height="1.03" fill="#6c2397"/>
<rect x="1170.49" y="730.87" width="8.3" height="1.57" fill="#0c98f0"/>
<rect x="1170.49" y="730.03" width="8.3" height="0.84" fill="#1da06c"/>
<rect x="1170.49" y="729.05" width="8.3" height="0.98" fill="#dbc8a3"/>
<rect x="1170.49" y="722.90" width="8.3" height="6.15" fill="#00cbd6"/>
<rect x="1179.73" y="741.20" width="8.3" height="7.80" fill="#0650c2"/>
<rect x="1179.73" y="740.65" width="8.3" height="0.55" fill="#ee4f52"/>
<rect x="1179.73" y="740.06" width="8.3" height="0.59" fill="#6c2397"/>
<rect x="1179.73" y="739.15" width="8.3" height="0.90" fill="#0c98f0"/>
<rect x="1179.73" y="738.56" width="8.3" height="0.59" fill="#1da06c"/>
<rect x="1179.73" y="738.07" width="8.3" height="0.49" fill="#dbc8a3"/>
<rect x="1179.73" y="734.00" width="8.3" height="4.07" fill="#00cbd6"/>
<rect x="1188.98" y="741.50" width="8.3" height="7.50" fill="#0650c2"/>
<rect x="1188.98" y="740.67" width="8.3" height="0.83" fill="#ee4f52"/>
<rect x="1188.98" y="739.81" width="8.3" height="0.86" fill="#6c2397"/>
<rect x="1188.98" y="738.53" width="8.3" height="1.28" fill="#0c98f0"/>
<rect x="1188.98" y="737.71" width="8.3" height="0.82" fill="#1da06c"/>
<rect x="1188.98" y="736.90" width="8.3" height="0.81" fill="#dbc8a3"/>
<rect x="1188.98" y="732.00" width="8.3" height="4.90" fill="#00cbd6"/>

  </svg>
</div>
</body></html>
